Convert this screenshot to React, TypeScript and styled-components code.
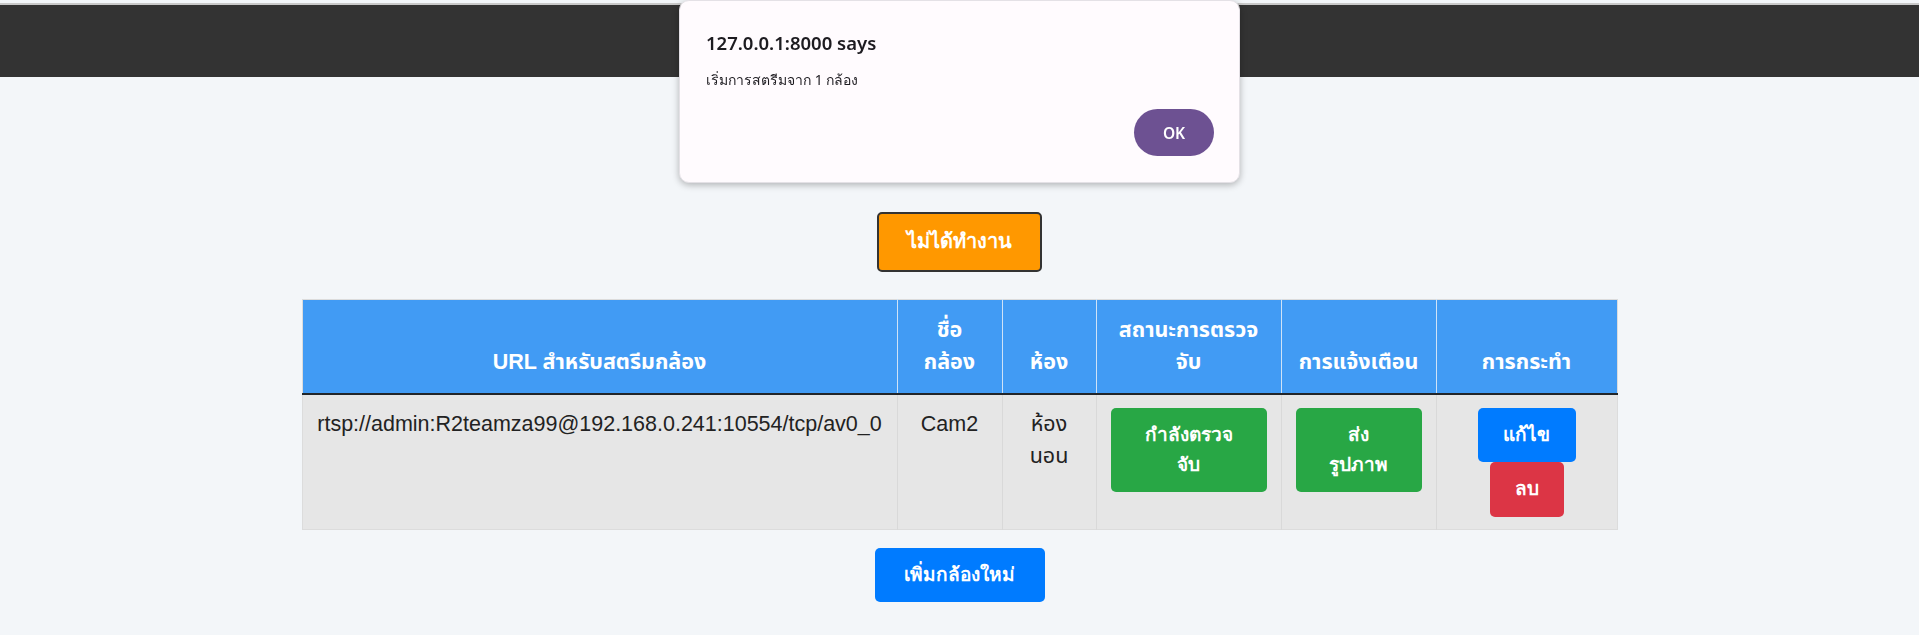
import React from "react";
import styled, { createGlobalStyle } from "styled-components";

const GlobalStyle = createGlobalStyle`
  html, body {
    margin: 0;
    padding: 0;
    background: #f3f6f9;
    font-family: "Liberation Sans", Arial, "Noto Sans Thai", sans-serif;
    color: #212529;
  }
  * { box-sizing: border-box; }
`;

const Page = styled.div`
  min-height: 635px;
  padding-top: 3px;
`;

const Header = styled.header`
  height: 74px;
  background: #333333;
  border-top: 2px solid #c9c9c9;
`;

const Main = styled.main`
  display: flex;
  flex-direction: column;
  align-items: center;
  padding-top: 135px;
`;

const StateButton = styled.button`
  min-width: 165px;
  padding: 13px 20px 14px;
  line-height: 29px;
  font-size: 20px;
  font-weight: 700;
  font-family: "Liberation Sans", Arial, sans-serif;
  color: #ffffff;
  background: #ff9800;
  border: 2px solid #333333;
  border-radius: 5px;
`;

const Table = styled.table`
  margin-top: 27px;
  width: 1315px;
  table-layout: fixed;
  border-collapse: collapse;
  border: 1px solid #dcdcdc;
  font-size: 21.5px;
  line-height: 1.5;
`;

const HeadCell = styled.th`
  background: #419bf4;
  color: #ffffff;
  font-weight: 700;
  text-align: center;
  vertical-align: bottom;
  padding: 14px 14px 14px;
  border-left: 1px solid #cfe3f7;
  border-bottom: 2px solid #222529;
  &:first-child { border-left: none; }
`;

const BodyRow = styled.tr`
  background: #e6e6e6;
`;

const Cell = styled.td`
  text-align: center;
  vertical-align: top;
  padding: 13px 14px 12px;
  border-left: 1px solid #d9d9d9;
  color: #222222;
  white-space: nowrap;
  &:first-child { border-left: none; }
`;

const FillButton = styled.button`
  display: block;
  width: 100%;
  padding: 12px 10px;
  line-height: 30px;
  font-size: 19px;
  font-weight: 700;
  font-family: "Liberation Sans", Arial, sans-serif;
  color: #ffffff;
  background: #28a745;
  border: none;
  border-radius: 5px;
`;

const ActionStack = styled.div`
  display: flex;
  flex-direction: column;
  align-items: center;
`;

const ActionButton = styled.button<{ $tone: "edit" | "delete" }>`
  padding: 12px 24px;
  line-height: 30px;
  font-size: 19px;
  font-weight: 700;
  font-family: "Liberation Sans", Arial, sans-serif;
  color: #ffffff;
  background: ${(p) => (p.$tone === "edit" ? "#007bff" : "#dc3545")};
  border: none;
  border-radius: 5px;
  min-width: ${(p) => (p.$tone === "edit" ? "98px" : "74px")};
  height: ${(p) => (p.$tone === "edit" ? "54px" : "55px")};
`;

const AddButton = styled.button`
  margin-top: 18px;
  min-width: 170px;
  padding: 12px 20px;
  line-height: 30px;
  font-size: 19px;
  font-weight: 700;
  font-family: "Liberation Sans", Arial, sans-serif;
  color: #ffffff;
  background: #007bff;
  border: none;
  border-radius: 5px;
`;

const Dialog = styled.div`
  position: fixed;
  top: 0;
  left: calc(50% - 280.5px);
  width: 561px;
  height: 183px;
  display: flex;
  flex-direction: column;
  padding: 30px 25px 26px 26px;
  background: #fffbfe;
  border: 1px solid #e4e1e6;
  border-radius: 10px;
  box-shadow: 0 2px 7px rgba(0, 0, 0, 0.28);
  font-family: "Noto Sans", "Open Sans", sans-serif;
`;

const DialogTitle = styled.div`
  font-size: 18.5px;
  font-weight: 600;
  line-height: 24px;
  color: #1d1b20;
`;

const DialogMessage = styled.div`
  margin-top: 15px;
  font-size: 14px;
  line-height: 20px;
  color: #1d1b20;
`;

const DialogActions = styled.div`
  margin-top: auto;
  display: flex;
  justify-content: flex-end;
`;

const OkButton = styled.button`
  width: 80px;
  height: 47px;
  border: none;
  border-radius: 24px;
  background: #6d5192;
  color: #ffffff;
  font-family: "Noto Sans", "Open Sans", sans-serif;
  font-size: 15.5px;
  font-weight: 600;
`;

const columns = [595, 105, 94, 185, 155, 181];

export default function App() {
  return (
    <Page>
      <GlobalStyle />
      <Header />
      <Main>
        <StateButton>ไม่ได้ทำงาน</StateButton>
        <Table>
          <colgroup>
            {columns.map((w, i) => (
              <col key={i} style={{ width: w }} />
            ))}
          </colgroup>
          <thead>
            <tr>
              <HeadCell>URL สำหรับสตรีมกล้อง</HeadCell>
              <HeadCell>
                ชื่อ
                <br />
                กล้อง
              </HeadCell>
              <HeadCell>ห้อง</HeadCell>
              <HeadCell>
                สถานะการตรวจ
                <br />
                จับ
              </HeadCell>
              <HeadCell>การแจ้งเตือน</HeadCell>
              <HeadCell>การกระทำ</HeadCell>
            </tr>
          </thead>
          <tbody>
            <BodyRow>
              <Cell>rtsp://admin:R2teamza99@192.168.0.241:10554/tcp/av0_0</Cell>
              <Cell>Cam2</Cell>
              <Cell>
                ห้อง
                <br />
                นอน
              </Cell>
              <Cell>
                <FillButton>
                  กำลังตรวจ
                  <br />
                  จับ
                </FillButton>
              </Cell>
              <Cell>
                <FillButton>
                  ส่ง
                  <br />
                  รูปภาพ
                </FillButton>
              </Cell>
              <Cell>
                <ActionStack>
                  <ActionButton $tone="edit">แก้ไข</ActionButton>
                  <ActionButton $tone="delete">ลบ</ActionButton>
                </ActionStack>
              </Cell>
            </BodyRow>
          </tbody>
        </Table>
        <AddButton>เพิ่มกล้องใหม่</AddButton>
      </Main>
      <Dialog role="alertdialog">
        <DialogTitle>127.0.0.1:8000 says</DialogTitle>
        <DialogMessage>เริ่มการสตรีมจาก 1 กล้อง</DialogMessage>
        <DialogActions>
          <OkButton>OK</OkButton>
        </DialogActions>
      </Dialog>
    </Page>
  );
}
